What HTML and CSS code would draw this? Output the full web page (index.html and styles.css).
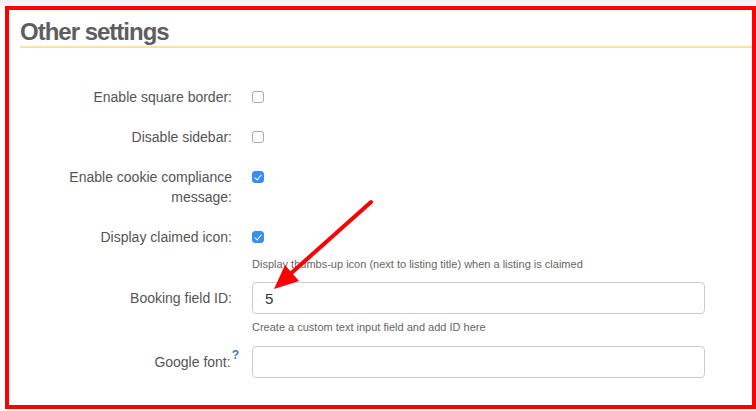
FILE: index.html
```html
<!DOCTYPE html>
<html lang="en">

<head>
    <meta charset="UTF-8">
    <meta name="viewport" content="width=device-width, initial-scale=1.0">
    <title>Other settings</title>
    <link rel="stylesheet" href="styles.css">
</head>

<body>
    <div class="frame">
        <h2 class="section__title">Other settings</h2>
        <form class="settings">
            <div class="field field--check">
                <label class="field__label" for="squareBorder">Enable square border:</label>
                <div class="field__control">
                    <input type="checkbox" id="squareBorder" />
                </div>
            </div>
            <div class="field field--check">
                <label class="field__label" for="disableSidebar">Disable sidebar:</label>
                <div class="field__control">
                    <input type="checkbox" id="disableSidebar" />
                </div>
            </div>
            <div class="field field--check">
                <label class="field__label" for="cookieMessage">Enable cookie compliance message:</label>
                <div class="field__control">
                    <input type="checkbox" id="cookieMessage" checked />
                </div>
            </div>
            <div class="field field--check field--help">
                <label class="field__label" for="claimedIcon">Display claimed icon:</label>
                <div class="field__control">
                    <input type="checkbox" id="claimedIcon" checked />
                    <p class="help">Display thumbs-up icon (next to listing title) when a listing is claimed</p>
                </div>
            </div>
            <div class="field field--text field--help">
                <label class="field__label" for="bookingField">Booking field ID:</label>
                <div class="field__control">
                    <input type="text" id="bookingField" value="5" />
                    <p class="help">Create a custom text input field and add ID here</p>
                </div>
            </div>
            <div class="field field--text">
                <label class="field__label" for="googleFont">Google font:<sup class="tip">?</sup></label>
                <div class="field__control">
                    <input type="text" id="googleFont" />
                </div>
            </div>
        </form>
    </div>

    <!-- annotation arrow drawn over the screenshot -->
    <svg class="arrow" width="756" height="411" viewBox="0 0 756 411">
        <line x1="371" y1="202" x2="288" y2="276" stroke="#ff0000" stroke-width="4" stroke-linecap="round" />
        <polygon points="274,289 285,265 299,281" fill="#ff0000" />
    </svg>
</body>

</html>
```

FILE: styles.css
```css
* {
    box-sizing: border-box;
    padding: 0px;
    margin: 0px;
}

body {
    width: 756px;
    height: 411px;
    overflow: hidden;
    position: relative;
    font-family: 'Liberation Sans', Arial, sans-serif;
    background: linear-gradient(to bottom, #f1f1f1 0, #fafafa 6px, #ffffff 6px);
}

.frame {
    margin: 6px 0 0 5px;
    width: 751px;
    height: 403px;
    border: 4px solid #ff0000;
    padding: 7px 0 0 11px;
    background-color: #ffffff;
}

.section__title {
    font-size: 24px;
    line-height: 29px;
    font-weight: bold;
    letter-spacing: -1px;
    color: #5e5e5e;
    border-bottom: 2px solid #fde0a2;
}

.settings {
    padding-top: 39px;
}

.field {
    display: flex;
    gap: 20px;
    margin-bottom: 20px;
}

.field--help {
    margin-bottom: 10px;
}

.field--text.field--help {
    margin-bottom: 11px;
}

.field__label {
    width: 212px;
    flex-shrink: 0;
    text-align: right;
    font-size: 14px;
    line-height: 20px;
    color: #555555;
}

.field--text .field__label {
    line-height: 32px;
}

.field__control {
    flex: 1;
}

.field--check .field__control {
    padding-top: 4px;
}

.tip {
    font-size: 12px;
    font-weight: bold;
    color: #2f7dc4;
    vertical-align: 8px;
    line-height: 0;
    margin-left: 1px;
    margin-right: -7px;
}

input[type="checkbox"] {
    appearance: none;
    -webkit-appearance: none;
    display: block;
    width: 12px;
    height: 12px;
    border: 1px solid #a9a9a9;
    border-radius: 3px;
    background-color: #ffffff;
    position: relative;
}

input[type="checkbox"]:checked {
    background-color: #3b8df5;
    border-color: #3b8df5;
}

input[type="checkbox"]:checked::after {
    content: "";
    position: absolute;
    left: 3px;
    top: 1px;
    width: 3px;
    height: 6px;
    border: solid #ffffff;
    border-width: 0 1.5px 1.5px 0;
    transform: rotate(40deg);
}

input[type="text"] {
    display: block;
    width: 453px;
    height: 32px;
    border: 1px solid #cccccc;
    border-radius: 4px;
    padding: 0 12px;
    font-family: 'Liberation Sans', Arial, sans-serif;
    font-size: 15px;
    color: #333333;
    outline: none;
}

.help {
    font-size: 11px;
    line-height: 16px;
    color: #666666;
    margin-top: 5px;
}

.field--check .help {
    margin-top: 13px;
}

.arrow {
    position: absolute;
    left: 0;
    top: 0;
    pointer-events: none;
}
```
